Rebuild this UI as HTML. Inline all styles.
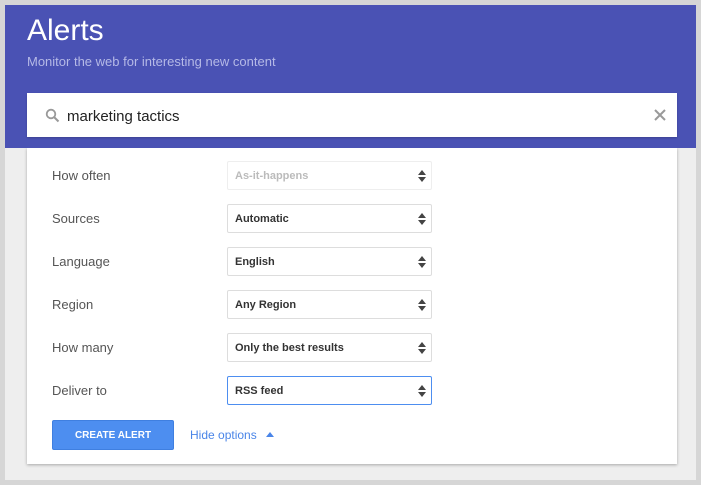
<!DOCTYPE html>
<html><head><style>
body{margin:0;width:701px;height:485px;background:#d6d6d6;font-family:"Liberation Sans",sans-serif;position:relative;overflow:hidden}
.inner{position:absolute;left:5px;top:5px;width:691px;height:475px;background:#eeeeee}
.hdr{position:absolute;left:5px;top:5px;width:691px;height:143px;background:#4a52b4}
h1{position:absolute;left:27px;top:14px;margin:0;font-weight:normal;color:#fff;font-size:30px}
.sub{position:absolute;left:27px;top:54px;color:#b5b9e6;font-size:13px}
.search{position:absolute;left:27px;top:93px;width:650px;height:44px;background:#fff;box-shadow:0 1px 2px rgba(0,0,0,.2)}
.search .t{position:absolute;left:40px;top:15px;font-size:15px;color:#222}
.card{position:absolute;left:27px;top:148px;width:650px;height:316px;background:#fff;box-shadow:0 1px 3px rgba(0,0,0,.3)}
.lbl{position:absolute;left:52px;font-size:13px;color:#555}
.sel{position:absolute;left:227px;width:203px;height:27px;border:1px solid #ddd;border-radius:2px;background:#fff;font-size:11px;font-weight:bold;color:#333;box-sizing:content-box}
.sel span{position:absolute;left:7px;top:8px}
.sel i{position:absolute;right:5px;top:8px;width:0;height:0;border-left:4px solid transparent;border-right:4px solid transparent;border-bottom:5px solid #444}
.sel b{position:absolute;right:5px;top:15px;width:0;height:0;border-left:4px solid transparent;border-right:4px solid transparent;border-top:5px solid #444}
.btn{position:absolute;left:52px;top:420px;width:122px;height:30px;background:#4d8ef0;border:1px solid #3f7fe0;border-radius:2px;box-sizing:border-box;color:#fff;font-size:10px;font-weight:bold;text-align:center;line-height:30px}
.link{position:absolute;left:190px;top:428px;font-size:12px;color:#4a85e8}
</style></head><body>
<div class="inner"></div>
<div class="card"></div>
<div class="hdr"></div>
<h1>Alerts</h1>
<div class="sub">Monitor the web for interesting new content</div>
<div class="search">
<svg style="position:absolute;left:18px;top:15px" width="15" height="15" viewBox="0 0 15 15"><circle cx="6" cy="6" r="4.3" fill="none" stroke="#999" stroke-width="1.8"/><path d="M9 9l4.5 4.5" stroke="#999" stroke-width="2"/></svg>
<span class="t">marketing tactics</span>
<svg style="position:absolute;left:627px;top:16px" width="12" height="12" viewBox="0 0 12 12"><path d="M1 1l10 10M11 1L1 11" stroke="#999" stroke-width="2"/></svg>
</div>
<div class="lbl" style="top:168px">How often</div>
<div class="sel" style="top:161px;border-color:#eee"><span style="color:#bbb">As-it-happens</span><i></i><b></b></div>
<div class="lbl" style="top:211px">Sources</div>
<div class="sel" style="top:204px"><span>Automatic</span><i></i><b></b></div>
<div class="lbl" style="top:254px">Language</div>
<div class="sel" style="top:247px"><span>English</span><i></i><b></b></div>
<div class="lbl" style="top:297px">Region</div>
<div class="sel" style="top:290px"><span>Any Region</span><i></i><b></b></div>
<div class="lbl" style="top:340px">How many</div>
<div class="sel" style="top:333px"><span>Only the best results</span><i></i><b></b></div>
<div class="lbl" style="top:383px">Deliver to</div>
<div class="sel" style="top:376px;border-color:#4d8ef0"><span>RSS feed</span><i></i><b></b></div>
<div class="btn">CREATE ALERT</div>
<div class="link">Hide options <span style="display:inline-block;margin-left:6px;width:0;height:0;border-left:4px solid transparent;border-right:4px solid transparent;border-bottom:5px solid #4a85e8;vertical-align:2px"></span></div>
</body></html>
